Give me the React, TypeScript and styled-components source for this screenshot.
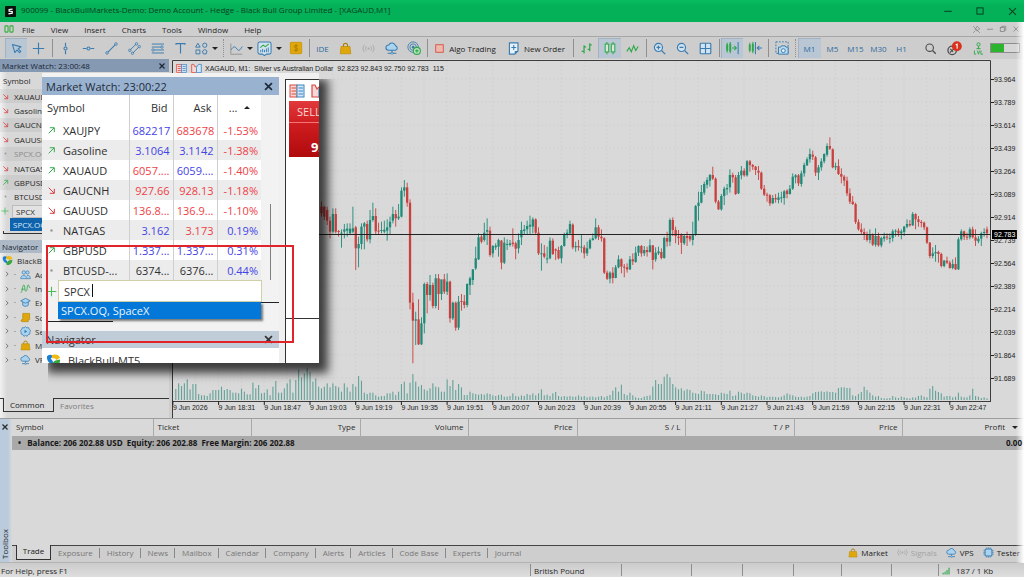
import React from "react";
import styled, { createGlobalStyle, css } from "styled-components";

const UI_FONT = '"Open Sans", "Noto Sans", sans-serif';
const CHART_FONT = '"Liberation Sans", sans-serif';
const BLUE = "#3b7cb0";
const GREEN = "#2fa84a";
const GOLD = "#dfa70c";
const GREY = "#8a8a8a";

const GlobalStyle = createGlobalStyle`
  * { box-sizing: border-box; }
  body { margin: 0; background: #cdcdcd; font-family: ${UI_FONT}; font-size: 8px; color: #2a2a2a; }
  button, input { font: inherit; color: inherit; }
  button { background: none; border: 0; padding: 0; cursor: default; }
  svg { display: block; flex: none; }
`;

/* ---------- icons ---------- */

const glyphs: Record<string, React.ReactNode> = {
  cursor: <path d="M3 3l3 10 2.500-3.200 3.200 3.400 1.600-1.600-3.200-3.300L13.500 6z" fill="none" stroke={BLUE} strokeWidth="1.300" strokeLinejoin="round" />,
  cross: <path d="M8 1v14M1 8h14" stroke={BLUE} strokeWidth="1.400" />,
  vline: <><path d="M8 1v4.500M8 10.500V15" stroke={BLUE} strokeWidth="1.400" /><circle cx="8" cy="8" r="1.900" fill="none" stroke={BLUE} strokeWidth="1.300" /></>,
  hline: <><path d="M1 8h4.500M10.500 8H15" stroke={BLUE} strokeWidth="1.400" /><circle cx="8" cy="8" r="1.900" fill="none" stroke={BLUE} strokeWidth="1.300" /></>,
  trend: <><path d="M3.500 12.500l9-9" stroke={BLUE} strokeWidth="1.300" /><circle cx="2.500" cy="13.500" r="1.600" fill="none" stroke={BLUE} /><circle cx="13.500" cy="2.500" r="1.600" fill="none" stroke={BLUE} /></>,
  channel: <><path d="M2.500 10l7.500-7.500M6 13.500L13.500 6" stroke={BLUE} strokeWidth="1.200" /><circle cx="2.200" cy="10.300" r="1.500" fill="none" stroke={BLUE} /><circle cx="10.500" cy="2.200" r="1.500" fill="none" stroke={BLUE} /><circle cx="5.500" cy="13.800" r="1.500" fill="none" stroke={BLUE} /><circle cx="13.800" cy="5.700" r="1.500" fill="none" stroke={BLUE} /></>,
  fib: <><path d="M1 2.500h15M1 6.200h11M4 9.800h12M1 13.500h15" stroke={BLUE} strokeWidth="1.200" /><circle cx="13.500" cy="6.200" r="1.500" fill="none" stroke={BLUE} /><circle cx="2.500" cy="9.800" r="1.500" fill="none" stroke={BLUE} /></>,
  text: <path d="M2.500 3.500V2h11v1.500M8 2v12" fill="none" stroke={BLUE} strokeWidth="1.400" />,
  shapes: <><path d="M3.500 1.500L6.300 6.300H.7z" fill="none" stroke={BLUE} strokeWidth="1.200" /><circle cx="12" cy="4" r="2.600" fill="none" stroke={BLUE} strokeWidth="1.200" /><path d="M1.200 9.800h4.800v4.800H1.200z" fill="none" stroke={BLUE} strokeWidth="1.200" /><path d="M12 9.200l2.800 1.900-1 3.500h-3.600l-1-3.500z" fill="none" stroke={BLUE} strokeWidth="1.200" /></>,
  wave: <><path d="M1 2v13h14" fill="none" stroke={GREY} strokeWidth="1" /><path d="M1.500 9.500c3-5 5-4 7-1s4 2 6.500-3" fill="none" stroke={BLUE} strokeWidth="1.200" /></>,
  indicator: <><path d="M3 1h10a2 2 0 012 2v9a2 2 0 01-2 2h-2.500L8 15.500 5.500 14H3a2 2 0 01-2-2V3a2 2 0 012-2z" fill="#cfe2ee" stroke={BLUE} strokeWidth="1.100" /><path d="M3.500 7l3-2.500 2.500 1.500 3.500-3" fill="none" stroke={GREEN} strokeWidth="1.100" /><path d="M4 12V9.500M6 12V8.500M8 12V9.500M10 12V8M12 12V7" stroke={BLUE} strokeWidth="1" /></>,
  dollar: <><rect x="1.500" y="1.500" width="13" height="13" rx="1" fill={GOLD} stroke="#c9950a" /><path d="M10.300 5.800C9.600 4.900 6 4.600 6 6.400c0 1.900 4.300 1.200 4.300 3.200 0 1.900-3.700 1.700-4.600.6M8 3.600v8.800" fill="none" stroke="#a87a00" strokeWidth="1" /></>,
  bag: <><path d="M5.500 6V4a2.500 2.500 0 015 0v2" fill="none" stroke="#a87a00" strokeWidth="1.300" /><path d="M2.500 5.500h11l1 9h-13z" fill={GOLD} stroke="#b98906" strokeWidth=".8" /></>,
  signals: <><circle cx="8" cy="8" r="1.300" fill="#a9a9a9" /><path d="M5.300 5.300a4 4 0 000 5.400M10.700 5.300a4 4 0 010 5.400M3 3.500a6.500 6.500 0 000 9M13 3.500a6.500 6.500 0 010 9" fill="none" stroke="#a9a9a9" strokeWidth="1.100" /></>,
  cloud: <><path d="M4 10.500a3 3 0 01.2-6 4.200 4.200 0 017.800.800 2.700 2.700 0 010 5.200z" fill="#a9d3ef" stroke={BLUE} strokeWidth="1.200" /><path d="M8 10.500V14M3 14h10" stroke={BLUE} strokeWidth="1.200" /><circle cx="8" cy="14" r="1.200" fill="#d0e4f2" stroke={BLUE} strokeWidth=".8" /></>,
  radar: <><circle cx="7" cy="7" r="6" fill="none" stroke={BLUE} strokeWidth="1" /><circle cx="7" cy="7" r="3.700" fill="none" stroke={BLUE} strokeWidth="1" /><circle cx="7" cy="7" r="1.500" fill={BLUE} /><circle cx="11.300" cy="11.300" r="4" fill="#bfe6c4" stroke={GREEN} strokeWidth="1.200" /><path d="M9.300 11.300h4M11.300 9.300v4" stroke={GREEN} strokeWidth="1.200" /></>,
  stop: <rect x="2.500" y="2.500" width="11" height="11" fill="#f1b7ae" stroke="#cf5440" strokeWidth="1.300" />,
  order: <><path d="M3 1h10.500v10L9.500 15H3z" fill="#e6f1f8" stroke={BLUE} strokeWidth="1.400" /><path d="M5.300 6.800h6M8.300 3.800v6" stroke={BLUE} strokeWidth="1.300" /><path d="M9.500 15v-4h4" fill={BLUE} /></>,
  bars: <path d="M5 4v10M2 11.500h3M5 6h2.500M12 1.500v10M9.500 9H12M12 3.500h2.500" fill="none" stroke={GREEN} strokeWidth="1.500" />,
  candles: <><path d="M4.500 1v14M11.500 1v14" stroke={GREEN} strokeWidth="1.200" /><rect x="2.500" y="3.500" width="4" height="9" fill="#d6e8d6" stroke={GREEN} strokeWidth="1.200" /><rect x="9.500" y="3.500" width="4" height="9" fill="#d6e8d6" stroke={GREEN} strokeWidth="1.200" /></>,
  line: <path d="M1 11.500l3-4.500 2.500 5 3-7.500 2.500 6 3-5" fill="none" stroke={GREEN} strokeWidth="1.400" />,
  zoomIn: <><circle cx="6.700" cy="6.700" r="5" fill="#cfe2f0" stroke={BLUE} strokeWidth="1.400" /><path d="M10.500 10.500L15 15M4.300 6.700h4.800M6.700 4.300v4.800" stroke={BLUE} strokeWidth="1.500" /></>,
  zoomOut: <><circle cx="6.700" cy="6.700" r="5" fill="#cfe2f0" stroke={BLUE} strokeWidth="1.400" /><path d="M10.500 10.500L15 15M4.300 6.700h4.800" stroke={BLUE} strokeWidth="1.500" /></>,
  tile: <><rect x="1.500" y="1.500" width="13" height="13" rx="1" fill="#d3e4f0" stroke={BLUE} strokeWidth="1.400" /><path d="M8 1.500v13M1.500 8h13" stroke={BLUE} strokeWidth="1.400" /></>,
  scroll: <><path d="M2.500 4v7M6 3v9" stroke={GREEN} strokeWidth="2.200" /><path d="M2.500 2v11M6 1v13M8 8h5M10.500 5.500L13 8l-2.500 2.500" fill="none" stroke={GREEN} strokeWidth="1.200" /><path d="M15 1v14" stroke={BLUE} strokeWidth="1.200" /></>,
  shift: <><path d="M2 4v7M5.500 3v9" stroke={GREEN} strokeWidth="2.200" /><path d="M2 2v11M5.500 1v13" stroke={GREEN} strokeWidth="1.100" /><path d="M8.500 1v14M16 8h-5.500M13 5.500L10.500 8l2.500 2.500" fill="none" stroke={BLUE} strokeWidth="1.200" /></>,
  camera: <><rect x="1" y="1" width="14" height="13" fill="none" stroke={BLUE} strokeDasharray="2 1.500" strokeWidth="1.100" /><path d="M4 7h2.500l1-1.500h4l1 1.500H15v8H4z" fill="#b9d8ec" stroke={BLUE} strokeWidth="1.100" /><circle cx="9.500" cy="11" r="2.200" fill="#e4f0f8" stroke={BLUE} strokeWidth="1.100" /></>,
  search: <><circle cx="7" cy="7" r="4.600" fill="none" stroke="#4c4c4c" strokeWidth="1.400" /><path d="M10.500 10.500l4 4" stroke="#4c4c4c" strokeWidth="1.600" /></>,
  badge: <><circle cx="5.500" cy="10" r="4.500" fill="none" stroke="#4c4c4c" strokeWidth="1.400" /><path d="M3 12.500l5-5M3.500 8.500l3 3" stroke="#4c4c4c" strokeWidth="1.200" /><circle cx="10.500" cy="5.500" r="5.300" fill="#d8321f" /><path d="M9.300 4.300l1.500-1v4.900" fill="none" stroke="#fff" strokeWidth="1.100" /></>,
  level: <><circle cx="8" cy="3" r="2" fill="none" stroke={GREEN} strokeWidth="1.200" /><path d="M8 5v3.500M5.500 8.200h5" stroke={GREEN} strokeWidth="1.200" /><path d="M3 10.500V15h2M6.500 10.500L8 15l1.500-4.500M11 10.500V15h2.500" fill="none" stroke={GREEN} strokeWidth="1.100" /></>,
  up: <path d="M3 13L12.500 3.500M5 3h8v8" fill="none" stroke={GREEN} strokeWidth="1.700" />,
  down: <path d="M3 3l9.500 9.500M13 5v8H5" fill="none" stroke="#d9363b" strokeWidth="1.700" />,
  flat: <circle cx="8" cy="8" r="2.200" fill="#9b9b9b" />,
  plus: <path d="M8 1v14M1 8h14" stroke="#4dbd5c" strokeWidth="1.600" />,
  brand: <><path d="M1 4.500C1 2 5 1 7.500 3L5 6.500c2 1 3 3 2 5.500C3 11 1 8 1 4.500z" fill="#1b7fd1" /><path d="M6 2.500C9 .5 14 1.500 15 5l-4 2.500C10 5.500 8.500 5.500 7 6z" fill="#f2b90f" /><path d="M7 14.500c-1.500-2 0-5 3-6.500l5-1c.5 4-3 8.500-8 7.500z" fill="#37a63f" /></>,
  people: <><circle cx="5.500" cy="5" r="2.500" fill="#a9d3ef" stroke={BLUE} /><circle cx="11" cy="5" r="2.300" fill="#a9d3ef" stroke={BLUE} /><path d="M1 14c0-6 9-6 9 0zM10 14h5c0-4-2-5-5-4.500" fill="#a9d3ef" stroke={BLUE} /></>,
  fx: <path d="M1 14c3 0 2-11 4.500-11S6 12 8.500 12 10 3 12 3s1 5 3 4M2 9h5" fill="none" stroke={GREEN} strokeWidth="1.200" />,
  hat: <><path d="M4 7v5c2 2 6 2 8 0V7" fill="#a9d3ef" stroke={BLUE} strokeWidth="1.200" /><path d="M1 5.500L8 2l7 3.500L8 9z" fill="#a9d3ef" stroke={BLUE} strokeWidth="1.200" /></>,
  scroll2: <path d="M4 2h10v9H12v3H3c-2 0-2-3 0-3h1z" fill={GOLD} stroke="#b98906" strokeWidth="1" />,
  gear: <><path d="M8 1l2 1.700 2.600-.3.800 2.500 2 1.600L14.300 9l.2 2.600-2.500.800L10.300 15 8 13.800 5.700 15 4 12.400l-2.500-.8.200-2.600L.6 6.500l2-1.600.800-2.500 2.600.3z" fill="#a9d3ef" stroke={BLUE} strokeWidth="1.100" /><path d="M6.500 5.500v5L10.500 8z" fill={BLUE} /></>,
  chip: <><rect x="3" y="3" width="10" height="10" rx="1.500" fill="#a9d3ef" stroke={BLUE} strokeWidth="1.500" /><path d="M5.500.5v2M8 .5v2M10.500.5v2M5.500 13.500v2M8 13.500v2M10.500 13.500v2M.5 5.500h2M.5 8h2M.5 10.500h2M13.500 5.500h2M13.500 8h2M13.500 10.500h2" stroke={BLUE} /></>,
  strength: <path d="M2 15v-3M5.500 15v-5M9 15V7M12.500 15V3" stroke={GREEN} strokeWidth="2" />,
  close: <path d="M3 3l10 10M13 3L3 13" stroke="currentColor" strokeWidth="2.400" />,
  closeThin: <path d="M3 3l10 10M13 3L3 13" stroke="currentColor" strokeWidth="1.500" />,
  minimise: <path d="M2 8.500h12" stroke="currentColor" strokeWidth="1.600" />,
  maximise: <rect x="3" y="3" width="10" height="10" fill="none" stroke="currentColor" strokeWidth="1.600" />,
  restore: <><rect x="2.500" y="5" width="8" height="8" fill="none" stroke="currentColor" strokeWidth="1.500" /><path d="M5.500 5V2.500h8v8H11" fill="none" stroke="currentColor" strokeWidth="1.500" /></>,
  pin: <path d="M2 2l12 12M9 2l5 5-3 1-2 3-4-4 3-2zM6 10l-4 4" fill="none" stroke="currentColor" strokeWidth="1.200" />,
  chevron: <path d="M5 2l6 6-6 6" fill="none" stroke="#555" strokeWidth="2" />,
  depth: <><rect x="1" y="2" width="7" height="12" fill="#f6d9d7" stroke="#d9473f" /><rect x="8" y="2" width="7" height="12" fill="#d5e6f5" stroke="#3a86c6" /><path d="M2.500 5H7M2.500 8H7M2.500 11H7" stroke="#d9473f" strokeWidth="1.200" /><path d="M9.500 5H14M9.500 8H14M9.500 11H14" stroke="#3a86c6" strokeWidth="1.200" /></>,
  oneClick: <><path d="M8 14H1V2h3l2 4 2-2" fill="#f6d9d7" stroke="#d9473f" strokeWidth="1.200" /><path d="M8 14h7V2h-4L8 6z" fill="#d5e6f5" stroke="#3a86c6" strokeWidth="1.200" /></>,
  logo: <><rect width="16" height="16" rx="1" fill="#06130c" /><path d="M11 4.500L6 5v2.500l4.500.500v2.500L5 11.500" fill="none" stroke="#fff" strokeWidth="1.800" /></>,
  twin: <><rect x="1.500" y="3" width="5" height="10" rx="1" fill="none" stroke="#2fae3c" strokeWidth="1.700" /><rect x="9.500" y="3" width="5" height="10" rx="1" fill="none" stroke="#2fae3c" strokeWidth="1.700" /></>,
};

const Icon = ({ name, size = 13 }: { name: string; size?: number }) => (
  <svg width={size} height={size} viewBox="0 0 16 16" aria-hidden="true">{glyphs[name]}</svg>
);

/* ---------- window chrome ---------- */

const Window = styled.div`
  position: relative;
  display: flex;
  flex-direction: column;
  min-height: 100vh;
  background: #cdcdcd;
`;
const EdgeGlow = styled.div`
  position: absolute;
  top: 22px;
  right: 0;
  bottom: 14px;
  width: 8px;
  background: linear-gradient(to right, transparent, #fff);
  pointer-events: none;
`;
const TitleBar = styled.header`
  display: flex;
  align-items: center;
  gap: 5px;
  height: 22px;
  padding: 0 6px 0 5px;
  background: linear-gradient(#08bd60, #04b058 30%);
  color: #06421f;
`;
const Title = styled.h1`
  flex: 1;
  margin: 0;
  font-size: 8px;
  font-weight: 400;
  line-height: 10px;
  padding-bottom: 2px;
  white-space: pre;
`;
const WindowButtons = styled.div<{ $gap: number }>`
  display: flex;
  align-items: center;
  gap: ${(p) => p.$gap}px;
`;
const MenuBar = styled.nav`
  display: flex;
  align-items: center;
  height: 15px;
  padding: 0 4px;
  border-bottom: 1px solid #a6a6a6;
  background: #cfcfcf;
  color: #1f1f1f;
`;
const Menus = styled.div`
  display: flex;
  flex: 1;
  gap: 16px;
  margin-left: 8px;
`;
const Muted = styled.div`
  color: #808080;
`;
const Toolbar = styled.div`
  display: flex;
  align-items: center;
  height: 22px;
  padding: 0 4px 0 5px;
  background: #cdcdcd;
`;
const Tool = styled.button<{ $active?: boolean; $w?: number; $dim?: boolean }>`
  display: flex;
  align-items: center;
  justify-content: center;
  gap: 4px;
  flex: none;
  width: ${(p) => p.$w ?? 23}px;
  height: 20px;
  color: #2e6c9e;
  white-space: nowrap;
  ${(p) => p.$active && css`
    background: #b9c7d5;
    box-shadow: inset 1px 1px 0 #a3b2c2;
  `}
`;
const WordTool = styled(Tool)`
  color: #1c1c1c;
`;
const Divider = styled.span<{ $dotted?: boolean; $w?: number }>`
  display: flex;
  justify-content: center;
  flex: none;
  width: ${(p) => p.$w ?? 4}px;
  height: 18px;
  &::before {
    content: "";
    border-left: 1px ${(p) => (p.$dotted ? "dotted" : "solid")} #8f8f8f;
  }
`;
const Caret = styled.span<{ $up?: boolean }>`
  border: 3px solid transparent;
  ${(p) => (p.$up ? "border-bottom-color: #222; border-top-width: 0;" : "border-top-color: #222; border-bottom-width: 0;")}
`;
const ToolsEnd = styled.div`
  display: flex;
  align-items: center;
  margin-left: auto;
`;
const Battery = styled.span`
  width: 30px;
  height: 10px;
  border: 1px solid #8c8c8c;
  background: linear-gradient(to right, #2cb52c 45%, #d6d6d6 45%);
`;

/* ---------- side panels ---------- */

const Main = styled.main`
  display: flex;
`;
const Side = styled.aside`
  display: flex;
  flex-direction: column;
  flex: none;
  width: 169px;
  margin-right: 3px;
  background: linear-gradient(to right, #f1f1f1, #d8d8d8 7px);
`;
const PanelHead = styled.div<{ $soft?: boolean }>`
  display: flex;
  align-items: center;
  justify-content: space-between;
  height: 13px;
  padding: 0 3px 0 2px;
  background: ${(p) => (p.$soft ? "#adb9c7" : "#8599b3")};
  color: #1b2735;
`;
const Watch = styled.div`
  display: flex;
  flex-direction: column;
  height: 146px;
`;
const WatchTitle = styled.div`
  padding: 3px 3px 0;
  height: 17px;
`;
const WatchRow = styled.div<{ $alt?: boolean; $dim?: boolean }>`
  display: flex;
  flex: 1;
  align-items: center;
  gap: 5px;
  padding-left: 2px;
  background: ${(p) => (p.$alt ? "rgba(0,0,0,0.05)" : "transparent")};
  color: ${(p) => (p.$dim ? "#8b8b8b" : "#262626")};
`;
const QuickAdd = styled.div`
  display: flex;
  align-items: center;
  gap: 3px;
  height: 14px;
  padding-left: 1px;
`;
const QuickInput = styled.input`
  flex: 1;
  min-width: 0;
  height: 13px;
  padding: 0 3px;
  border: 1px solid #bbb;
  background: #e2e2e2;
`;
const QuickHit = styled.button`
  height: 13px;
  margin-left: 10px;
  padding: 0 3px;
  background: #0f63ad;
  color: #d9e8f5;
  text-align: left;
`;
const TabEdge = styled.div`
  height: 3px;
  margin: 0 0 6px 3px;
  border: solid #333;
  border-width: 0 0 1px 1px;
`;
const Tree = styled.ul`
  display: flex;
  flex-direction: column;
  height: 114px;
  margin: 0;
  padding: 0;
  list-style: none;
`;
const TreeItem = styled.li<{ $root?: boolean }>`
  display: flex;
  flex: 1;
  align-items: center;
  gap: 4px;
  padding-left: ${(p) => (p.$root ? 2 : 4)}px;
`;
const Twig = styled.span`
  width: 2px;
  border-top: 1px solid #a9a9a9;
`;
const SideTabs = styled.div`
  display: flex;
  align-items: center;
  height: 14px;
  margin-top: auto;
  margin-bottom: 6px;
  &::before {
    content: "";
    width: 3px;
    align-self: flex-start;
    border-top: 1px solid #333;
  }
`;
const SideTab = styled.button<{ $active?: boolean }>`
  width: ${(p) => (p.$active ? "51px" : "auto")};
  flex: ${(p) => (p.$active ? "none" : 1)};
  height: 14px;
  padding: 0 6px;
  text-align: left;
  border: solid #333;
  border-width: ${(p) => (p.$active ? "0 1px 1px 1px" : "1px 0 0 0")};
  color: ${(p) => (p.$active ? "#222" : "#7d7d7d")};
`;

/* ---------- chart ---------- */

const ChartPane = styled.section`
  flex: 1;
  min-width: 0;
  background: #d9d9d9;
`;
const ChartSvg = styled.svg`
  width: 100%;
  height: auto;
  font-family: ${CHART_FONT};
  font-size: 7px;
  fill: #222;
`;

type Candle = [high: number, low: number, open: number, close: number];

// Bars are stored in thirds of a pixel below the base line of their session.
const early: Candle[] = [
  [425,470,440,460],[438,480,440,470],[440,495,450,482],[470,535,482,515],[445,520,515,462],[445,520,462,515],[510,530,513,516],[508,563,520,518],[492,535,515,508],[490,530,512,506],[490,525,520,506],[440,520,515,505],
];
const middle: Candle[] = [
  [288,420,292,355],[320,412,355,342],[280,358,342,290],[276,358,290,280],[272,335,282,328],[240,340,328,270],[218,275,270,258],[235,312,258,304],[278,315,302,304],[275,310,302,300],
  [272,310,305,299],[268,332,302,292],[260,315,292,275],[230,280,272,252],[240,290,252,265],[222,270,265,260],[172,262,260,182],[150,200,182,172],[158,230,172,218],[208,538,218,518],
  [488,700,518,572],[545,645,572,568],[508,645,568,643],[562,645,643,580],[458,610,580,462],[456,550,462,495],[435,512,495,465],[458,535,465,528],[432,535,528,445],[432,540,445,492],
  [450,510,492,448],[432,492,448,485],[430,495,485,455],[452,578,455,565],[515,570,565,518],[515,602,518,593],[498,600,593,515],[492,542,513,516],[495,535,514,525],[460,532,525,462],
  [440,495,465,445],[418,465,450,418],[350,420,415,385],[310,390,388,322],[312,340,320,335],[278,335,330,308],[265,345,305,300],[290,380,302,375],[345,382,370,348],[340,360,352,347],
  [326,380,350,330],[330,418,332,398],[322,402,398,338],[328,360,345,342],[330,350,345,340],[295,350,338,342],[335,388,340,356],[310,370,355,330],[275,345,322,300],[285,315,303,298],
  [272,315,298,288],[257,312,290,284],[262,310,290,268],[265,312,268,308],[292,375,308,370],[340,422,372,370],[345,385,370,380],[350,400,388,385],[322,388,385,332],[325,375,332,372],
  [355,390,358,362],[350,388,360,385],[345,400,385,348],[308,350,348,312],[298,325,312,308],[272,312,310,282],[280,358,284,352],[335,365,352,348],[330,362,348,352],[312,368,352,350],
  [345,385,352,370],[335,378,370,355],[325,358,355,330],[310,332,330,325],[265,328,325,292],[285,330,292,320],[298,335,320,325],[322,432,325,428],[422,450,428,446],[424,460,446,428],
  [412,460,428,444],[405,445,444,412],[376,415,412,388],[385,430,388,410],[402,442,410,412],[400,428,412,418],[378,420,418,388],[370,405,388,394],[350,398,396,368],[346,378,368,348],
  [345,380,348,370],[348,378,370,360],[350,380,360,366],[328,368,366,346],[345,418,346,390],[352,395,388,368],[350,375,370,364],[355,388,366,384],[320,386,384,324],[305,350,324,335],
  [265,348,335,270],[262,318,270,300],[290,340,300,318],[300,345,320,324],
];
const late: Candle[] = [
  [520,582,525,548],[522,555,550,528],[515,558,528,534],[522,545,528,538],[485,556,540,525],[435,528,525,438],[395,482,438,428],[375,430,428,396],[365,405,398,372],[352,385,374,360],
  [342,380,362,345],[320,360,345,356],[352,430,356,425],[420,450,425,448],[402,452,448,408],[380,435,408,386],[372,405,388,384],[328,398,382,345],[338,368,345,352],[345,405,352,402],
  [336,402,400,345],[318,358,346,332],[325,350,332,346],[300,350,346,304],[300,335,304,315],[312,330,315,320],[318,345,320,330],[318,360,332,338],[335,390,338,386],[375,408,386,404],
  [398,425,404,406],[402,438,406,430],[405,432,430,414],[402,428,414,418],[398,430,420,412],[395,428,414,412],[390,434,414,394],[388,415,392,402],[375,404,402,386],[340,390,386,350],
  [342,370,352,346],[342,378,346,370],[332,380,372,340],[308,350,340,315],[292,318,316,298],[266,308,298,282],[272,300,284,290],[288,348,292,338],[315,360,338,322],[295,332,322,304],
  [280,310,304,282],[250,290,284,258],[232,270,258,266],[265,325,268,322],[308,330,322,318],[298,345,318,342],[325,370,342,350],[345,378,350,362],[350,408,362,400],[385,432,400,425],
  [408,435,425,432],[428,492,432,486],[478,512,486,508],[490,525,508,516],[505,540,516,524],[515,545,524,540],[508,550,540,522],[520,558,524,554],[505,560,554,528],[518,560,528,556],
  [530,562,556,534],[518,545,536,530],[520,540,530,533],[520,550,536,534],[508,545,534,514],[508,530,514,512],[505,530,512,520],[508,538,520,514],[498,528,516,500],[478,505,500,492],
  [480,500,492,496],[456,498,496,462],[460,508,462,478],[468,500,478,486],[480,502,486,488],[485,510,488,502],[500,552,502,548],[546,595,548,588],[562,595,588,580],[555,605,580,576],
  [572,608,576,582],[578,622,582,618],[600,622,618,602],[590,612,602,608],[602,626,608,624],[598,628,624,612],[592,630,612,628],[532,630,628,538],[508,542,538,514],[512,540,514,530],
  [518,540,530,532],[502,538,532,508],[500,535,508,532],[508,558,532,542],[528,550,544,536],[515,558,536,520],[505,530,518,516],[500,535,508,520],
];
const volumes = [
  33,50,42,50,62,32,48,48,18,14,14,12,20,30,30,30,40,30,33,30,22,22,20,34,25,17,17,52,35,45,20,22,32,14,40,57,22,22,35,50,62,22,60,92,68,80,97,85,55,65,40,35,40,50,38,50,42,38,25,50,38,25,48,
  40,72,58,22,18,22,22,14,10,12,12,20,20,25,15,25,48,55,20,52,78,55,40,45,32,28,35,50,40,38,25,25,62,42,60,30,48,38,15,15,25,20,18,16,18,16,20,18,14,12,15,16,10,10,12,20,12,10,14,12,18,15,20,14,20,32,14,16,12,20,24,12,10,12,10,12,10,10,14,10,12,8,10,10,8,10,12,8,12,15,28,38,25,46,18,14,22,14,8,6,6,10,12,14,40,60,48,48,70,78,68,48,38,32,
  35,28,32,30,22,20,18,28,26,18,18,18,17,15,22,20,18,28,12,14,25,22,18,22,20,14,12,10,14,12,8,10,10,9,8,10,14,20,16,14,10,9,10,8,10,12,20,24,25,26,24,26,24,24,22,36,38,38,36,36,14,12,18,24,40,30,22,14,10,12,6,5,5,6,12,8,6,10,8,6,5,8,7,12,14,10,8,34,42,28,24,20,10,12,12,8,10,22,10,8,8,14,34,12,10,6,8,5,
];
const STEP = 45.7 / 16;
const ORIGIN_X = 355.7;
const barX = (i: number) => ORIGIN_X + i * STEP;

const prices = ["93.964","93.789","93.614","93.439","93.264","93.089","92.914","92.739","92.564","92.389","92.214","92.039","91.864","91.689"];
const times = ["9 Jun 2026","9 Jun 18:31","9 Jun 18:47","9 Jun 19:03","9 Jun 19:19","9 Jun 19:35","9 Jun 19:51","9 Jun 20:07","9 Jun 20:23","9 Jun 20:39","9 Jun 20:55","9 Jun 21:11","9 Jun 21:27","9 Jun 21:43","9 Jun 21:59","9 Jun 22:15","9 Jun 22:31","9 Jun 22:47"];

const Candles = ({ data, first, base }: { data: Candle[]; first: number; base: number }) => (
  <g>
    {data.map(([high, low, open, close], i) => {
      const x = barX(first + i);
      const colour = open >= close ? "#1f8a78" : "#c9413f";
      const top = base + Math.min(open, close) / 3;
      const height = Math.max(Math.abs(open - close) / 3, 1);
      return (
        <g key={i} fill={colour}>
          <rect x={x - 0.4} y={base + high / 3} width={0.9} height={(low - high) / 3} />
          <rect x={x - 1.1} y={top} width={2.3} height={height} />
        </g>
      );
    })}
  </g>
);

const PriceChart = () => (
  <ChartSvg viewBox="172 59 852 359" role="img" aria-label="XAGAUD one minute chart">
    <g stroke="#cecece" strokeWidth="0.7" strokeDasharray="2 2">
      {prices.map((p, i) => <path key={p} d={`M173 ${79 + i * 23}H990`} />)}
      {Array.from({ length: 35 }, (_, i) => <path key={i} d={`M${195.6 + i * 22.85} 61V400`} />)}
    </g>
    <g fill="#62a298">
      {volumes.map((v, i) => <rect key={i} x={barX(i - 63) - 0.5} y={400 - v / 3} width={1.1} height={v / 3} />)}
    </g>
    <Candles data={early} first={-12} base={60} />
    <Candles data={middle} first={0} base={130} />
    <Candles data={late} first={114} base={60} />
    <path d="M172.500 418V60.500H990.500V401.500M172 401.500H991" fill="none" stroke="#3c3c3c" />
    <path d="M172 234.500H991" stroke="#222" />
    {prices.map((p, i) => (
      <g key={p}>
        <path d={`M991 ${79.5 + i * 23}h3`} stroke="#222" />
        <text x="994" y={82 + i * 23}>{p}</text>
      </g>
    ))}
    {times.map((t, i) => (
      <g key={t}>
        <path d={`M${172.9 + i * 45.7} 401v4`} stroke="#222" />
        <text x={172.9 + i * 45.7} y={410}>{t}</text>
      </g>
    ))}
    <rect x="992" y="230" width="25" height="9" fill="#000" />
    <text x="994" y="237" fill="#fff">92.783</text>
    <svg x="176" y="63" width="11" height="11" viewBox="0 0 16 16">{glyphs.depth}</svg>
    <svg x="191" y="63" width="11" height="11" viewBox="0 0 16 16">{glyphs.oneClick}</svg>
    <text x="205" y="71">{"XAGAUD, M1:\u00a0 Silver vs Australian Dollar\u00a0 92.823 92.843 92.750 92.783\u00a0 115"}</text>
  </ChartSvg>
);

/* ---------- magnified market watch ---------- */

const Lens = styled.section`
  position: absolute;
  top: 73px;
  left: 42px;
  display: flex;
  width: 277px;
  height: 290px;
  overflow: hidden;
  background: #f0f0f0;
  font-size: 11px;
  color: #303030;
`;
const LensShadow = styled.div`
  position: absolute;
  top: 73px;
  left: 42px;
  width: 277px;
  height: 290px;
  box-shadow: 7px 8px 9px 2px rgba(0, 0, 0, 0.72);
  clip-path: inset(6px -30px -30px 6px);
`;
const LensPanel = styled.div`
  display: flex;
  flex-direction: column;
  flex: none;
  width: 237px;
  padding-top: 4px;
  background: #f2f2f2;
`;
const LensHead = styled.div<{ $soft?: boolean }>`
  display: flex;
  align-items: center;
  justify-content: space-between;
  flex: none;
  height: ${(p) => (p.$soft ? 17 : 18)}px;
  padding: 0 5px 0 4px;
  background: ${(p) => (p.$soft ? "#c1ccd9" : "#98b2d0")};
  color: ${(p) => (p.$soft ? "#333" : "#1f2a38")};
`;
const LensBody = styled.div`
  display: flex;
  align-items: flex-start;
  flex: none;
  height: 185px;
`;
const Quotes = styled.table`
  width: 219px;
  table-layout: fixed;
  border-collapse: collapse;
  background: #fff;
  th, td {
    padding: 0 3px;
    text-align: right;
    font-weight: 400;
    border-left: 1px solid #cfcfcf;
    white-space: nowrap;
    line-height: 19px;
  }
  th { height: 25px; padding: 0 5px; }
  th:first-child, td:first-child { text-align: left; border-left: 0; padding-left: 5px; }
`;
const QuoteRow = styled.tr<{ $alt: boolean }>`
  height: 20px;
  background: ${(p) => (p.$alt ? "#ececec" : "#fff")};
`;
const tones = { b: "#4343e6", r: "#ee4145", k: "#303030" };
type Tone = keyof typeof tones;
const Quote = styled.td<{ $tone: Tone }>`
  color: ${(p) => tones[p.$tone]};
`;
const SymbolCell = styled.span`
  display: flex;
  align-items: center;
  gap: 7px;
`;
const SortHead = styled.span`
  display: flex;
  align-items: center;
  justify-content: space-evenly;
`;
const ScrollTrack = styled.div`
  flex: 1;
  padding: 109px 8px 0 9px;
`;
const ScrollThumb = styled.div`
  height: 76px;
  width: 1px;
  background: #808080;
`;
const SearchRow = styled.label`
  position: relative;
  display: flex;
  align-items: center;
  flex: none;
  gap: 1px;
  height: 22px;
  padding-left: 4px;
`;
const TextCursor = styled.span`
  position: absolute;
  top: 4px;
  left: 50px;
  width: 1px;
  height: 13px;
  background: #111;
`;
const SearchInput = styled.input`
  width: 204px;
  height: 22px;
  padding: 0 5px;
  border: 1px solid #cfcfa8;
  background: #fff;
`;
const HitRow = styled.div`
  position: relative;
  display: flex;
  flex: none;
  height: 19px;
  padding-left: 16px;
  &::before {
    content: "";
    position: absolute;
    top: 0;
    left: 5px;
    width: 65px;
    height: 19px;
    border: solid #222;
    border-width: 0 0 1px 1px;
  }
  &::after {
    content: "";
    flex: 1;
    border-top: 1px solid #222;
  }
`;
const Hit = styled.button`
  position: relative;
  width: 203px;
  height: 17px;
  padding: 0 3px;
  background: #0478d8;
  color: #e8f3fc;
  text-align: left;
  line-height: 16px;
  box-shadow: 2px 2px 2px rgba(0, 0, 0, 0.5);
`;
const LensGap = styled.div`
  flex: none;
  height: 10px;
`;
const LensRoot = styled.div`
  display: flex;
  align-items: center;
  gap: 7px;
  height: 24px;
  flex: none;
  padding-left: 4px;
  background: #fff;
`;
const LensChart = styled.div`
  flex: 1;
  margin: 6px 0 0 6px;
  border: solid #333;
  border-width: 1px 0 0 1px;
  background: #fff;
`;
const LensIcons = styled.div`
  display: flex;
  gap: 6px;
  height: 21px;
  padding: 3px 0 0 3px;
`;
const Sell = styled.button`
  display: flex;
  flex-direction: column;
  width: 44px;
  height: 56px;
  margin-left: 3px;
  background: linear-gradient(#e2393b, #cf1d20 40%, #b00a0d);
  color: #f6d6d4;
  text-align: left;
`;
const SellLabel = styled.span`
  width: 100%;
  height: 22px;
  padding: 2px 8px;
  line-height: 18px;
  border-bottom: 1px solid #e77;
`;
const SellPrice = styled.strong`
  padding: 15px 22px 0;
  color: #fff;
  font-size: 13px;
  line-height: 18px;
`;
const LensAxis = styled.div`
  height: 162px;
  border-bottom: 1px solid #333;
`;
const Highlight = styled.div`
  position: absolute;
  top: 245px;
  left: 46px;
  width: 248px;
  height: 98px;
  border: 2px solid #e0242a;
  pointer-events: none;
`;

type QuoteData = [icon: string, name: string, bid: string, bidTone: Tone, ask: string, askTone: Tone, change: string];
const quotes: QuoteData[] = [
  ["up", "XAUJPY", "682217", "b", "683678", "r", "-1.53%"],
  ["up", "Gasoline", "3.1064", "b", "3.1142", "b", "-1.38%"],
  ["up", "XAUAUD", "6057....", "r", "6059....", "b", "-1.40%"],
  ["down", "GAUCNH", "927.66", "r", "928.13", "r", "-1.18%"],
  ["down", "GAUUSD", "136.8...", "r", "136.9...", "r", "-1.10%"],
  ["flat", "NATGAS", "3.162", "b", "3.173", "r", "0.19%"],
  ["up", "GBPUSD", "1.337...", "b", "1.337...", "b", "0.31%"],
  ["flat", "BTCUSD-...", "6374...", "k", "6376...", "k", "0.44%"],
];

const MarketLens = () => (
  <>
    <LensShadow />
    <Lens aria-label="Market Watch">
      <LensPanel>
        <LensHead>
          <span>Market Watch: 23:00:22</span>
          <button aria-label="Close Market Watch"><Icon name="close" size={11} /></button>
        </LensHead>
        <LensBody>
          <Quotes>
            <colgroup><col width="87" /><col width="44" /><col width="44" /><col width="44" /></colgroup>
            <thead>
              <tr><th>Symbol</th><th>Bid</th><th>Ask</th><th><SortHead>...<Caret $up /></SortHead></th></tr>
            </thead>
            <tbody>
              {quotes.map(([icon, name, bid, bt, ask, at, change], i) => (
                <QuoteRow key={name} $alt={i % 2 === 1}>
                  <td><SymbolCell><Icon name={icon} size={9} />{name}</SymbolCell></td>
                  <Quote $tone={bt}>{bid}</Quote>
                  <Quote $tone={at}>{ask}</Quote>
                  <Quote $tone={change.startsWith("-") ? "r" : "b"}>{change}</Quote>
                </QuoteRow>
              ))}
            </tbody>
          </Quotes>
          <ScrollTrack><ScrollThumb /></ScrollTrack>
        </LensBody>
        <SearchRow>
          <Icon name="plus" size={11} />
          <SearchInput aria-label="Add symbol" defaultValue="SPCX" />
          <TextCursor />
        </SearchRow>
        <HitRow><Hit>SPCX.OQ, SpaceX</Hit></HitRow>
        <LensGap />
        <LensHead $soft>
          <span>Navigator</span>
          <button aria-label="Close Navigator"><Icon name="close" size={11} /></button>
        </LensHead>
        <LensRoot><Icon name="brand" size={15} />BlackBull-MT5</LensRoot>
      </LensPanel>
      <LensChart>
        <LensIcons><Icon name="depth" size={16} /><Icon name="oneClick" size={16} /></LensIcons>
        <Sell><SellLabel>SELL</SellLabel><SellPrice>92</SellPrice></Sell>
        <LensAxis />
      </LensChart>
    </Lens>
    <Highlight />
  </>
);

/* ---------- toolbox ---------- */

const Toolbox = styled.section`
  display: flex;
  flex: 1;
  border-top: 1px solid #9d9d9d;
  background: #d9d9d9;
`;
const Spine = styled.div`
  display: flex;
  flex-direction: column;
  align-items: center;
  justify-content: space-between;
  flex: none;
  width: 12px;
  padding: 4px 2px 3px 0;
  background: linear-gradient(to right, #bacbdd 8px, #d9d9d9);
`;
const SpineLabel = styled.span`
  writing-mode: vertical-rl;
  transform: rotate(180deg);
  line-height: 10px;
`;
const ToolboxBody = styled.div`
  display: flex;
  flex-direction: column;
  flex: 1;
  min-width: 0;
`;
const Trades = styled.table`
  width: 100%;
  table-layout: fixed;
  border-collapse: collapse;
  line-height: 10px;
  th {
    height: 17px;
    padding: 0 4px 1px;
    font-weight: 400;
    text-align: right;
    border-left: 1px solid #a9a9a9;
  }
  th:first-child { border-left: 0; }
  th:nth-child(-n + 2) { text-align: left; }
  td { height: 14px; padding: 0 2px 0 6px; background: #a9a9a9; font-weight: 700; color: #161616; white-space: pre; }
  td:last-child { text-align: right; }
`;
const ProfitHead = styled.span`
  display: flex;
  align-items: center;
  justify-content: flex-end;
  gap: 7px;
  padding-right: 2px;
`;
const ProfitTotal = styled.span`
  position: relative;
  z-index: 1;
`;
const Tabs = styled.div`
  display: flex;
  height: 17px;
  margin-top: auto;
  background: #cecece;
  &::before {
    content: "";
    width: 4px;
    border-top: 1px solid #444;
  }
`;
const TradeTab = styled.button`
  width: 35px;
  height: 15px;
  padding-bottom: 2px;
  line-height: 10px;
  border: solid #333;
  border-width: 0 1px 1px 1px;
  background: #d9d9d9;
  color: #1a1a1a;
`;
const TabList = styled.div`
  display: flex;
  flex: 1;
  align-items: center;
  padding: 0 4px 3px 0;
  border-top: 1px solid #444;
`;
const BoxTab = styled.button`
  height: 10px;
  padding: 0 6px 0 7px;
  line-height: 9px;
  color: #777;
  & + & { border-left: 1px solid #888; }
`;
const Services = styled.div`
  display: flex;
  gap: 9px;
  margin-left: auto;
`;
const Service = styled.button<{ $off?: boolean }>`
  display: flex;
  align-items: center;
  gap: 3px;
  color: ${(p) => (p.$off ? "#a3a3a3" : "#222")};
`;
const StatusBar = styled.footer`
  display: flex;
  align-items: center;
  height: 15px;
  border-top: 1px solid #b4b4b4;
  background: linear-gradient(#cbcbcb, #dedede);
`;
const StatusCell = styled.div<{ $size: number }>`
  display: flex;
  align-items: center;
  gap: 5px;
  flex: ${(p) => p.$size} 1 ${(p) => p.$size}px;
  height: 12px;
  padding-left: 3px;
  white-space: nowrap;
  & + & { border-left: 1px solid #8d8d8d; }
  &:first-child { padding-left: 1px; }
`;

const watch: [string, string][] = [["down", "XAUAUD"], ["down", "Gasoline"], ["down", "GAUCNH"], ["down", "GAUUSD"], ["flat", "SPCX.OQ"], ["down", "NATGAS"], ["up", "GBPUSD"], ["flat", "BTCUSD"]];
const tree: [string, string][] = [["people", "Accounts"], ["fx", "Indicators"], ["hat", "Experts"], ["scroll2", "Scripts"], ["gear", "Services"], ["bag", "Market"], ["cloud", "VPS"]];
const columns: [string, number][] = [["Symbol", 141], ["Ticket", 98], ["Type", 109], ["Volume", 108], ["Price", 109], ["S / L", 108], ["T / P", 109], ["Price", 108]];
const boxTabs = ["Exposure", "History", "News", "Mailbox", "Calendar", "Company", "Alerts", "Articles", "Code Base", "Experts", "Journal"];
const drawTools = ["vline", "hline", "trend", "channel", "fib", "text"];

const App = () => (
  <Window>
    <GlobalStyle />
    <TitleBar>
      <Icon name="logo" size={11} />
      <Title>900099 - BlackBullMarkets-Demo: Demo Account - Hedge - Black Bull Group Limited - [XAGAUD,M1]</Title>
      <WindowButtons $gap={22}>
        <button aria-label="Minimise"><Icon name="minimise" size={10} /></button>
        <button aria-label="Maximise"><Icon name="maximise" size={10} /></button>
        <button aria-label="Close"><Icon name="closeThin" size={11} /></button>
      </WindowButtons>
    </TitleBar>
    <MenuBar>
      <Icon name="twin" size={10} />
      <Menus>
        {["File", "View", "Insert", "Charts", "Tools", "Window", "Help"].map((m) => <button key={m}>{m}</button>)}
      </Menus>
      <Muted>
        <WindowButtons $gap={5}>
          <button aria-label="Pin"><Icon name="pin" size={9} /></button>
          <button aria-label="Minimise chart"><Icon name="minimise" size={8} /></button>
          <button aria-label="Restore chart"><Icon name="restore" size={8} /></button>
          <button aria-label="Close chart"><Icon name="closeThin" size={8} /></button>
        </WindowButtons>
      </Muted>
    </MenuBar>
    <Toolbar>
      <Tool $active $w={22} aria-label="Cursor"><Icon name="cursor" /></Tool>
      <Tool aria-label="Crosshair"><Icon name="cross" /></Tool>
      <Divider />
      {drawTools.map((t) => <Tool key={t} aria-label={t}><Icon name={t} /></Tool>)}
      <Tool $w={28} aria-label="Shapes"><Icon name="shapes" /><Caret /></Tool>
      <Divider $dotted $w={7} />
      <Tool $w={28} aria-label="Chart type"><Icon name="wave" /><Caret /></Tool>
      <Tool $w={29} aria-label="Indicators"><Icon name="indicator" size={15} /><Caret /></Tool>
      <Tool aria-label="Quotes"><Icon name="dollar" size={14} /></Tool>
      <Divider />
      <Tool>IDE</Tool>
      <Tool aria-label="Market"><Icon name="bag" /></Tool>
      <Tool aria-label="Signals"><Icon name="signals" /></Tool>
      <Tool aria-label="VPS"><Icon name="cloud" size={14} /></Tool>
      <Tool $w={22} aria-label="Copy trading"><Icon name="radar" size={14} /></Tool>
      <Divider />
      <WordTool $w={72}><Icon name="stop" size={11} />Algo Trading</WordTool>
      <WordTool $w={70}><Icon name="order" />New Order</WordTool>
      <Divider />
      <Tool aria-label="Bars"><Icon name="bars" /></Tool>
      <Tool $active aria-label="Candles"><Icon name="candles" size={14} /></Tool>
      <Tool aria-label="Line"><Icon name="line" /></Tool>
      <Divider />
      <Tool aria-label="Zoom in"><Icon name="zoomIn" /></Tool>
      <Tool aria-label="Zoom out"><Icon name="zoomOut" /></Tool>
      <Tool aria-label="Tile windows"><Icon name="tile" /></Tool>
      <Divider />
      <Tool $active $w={22} aria-label="Auto scroll"><Icon name="scroll" size={14} /></Tool>
      <Tool aria-label="Chart shift"><Icon name="shift" size={14} /></Tool>
      <Divider />
      <Tool aria-label="Screenshot"><Icon name="camera" size={14} /></Tool>
      <Divider $dotted $w={5} />
      {["M1", "M5", "M15", "M30", "H1"].map((t) => <Tool key={t} $active={t === "M1"}>{t}</Tool>)}
      <ToolsEnd>
        <Tool $w={24} aria-label="Search"><Icon name="search" /></Tool>
        <Tool $w={24} aria-label="Notifications"><Icon name="badge" size={15} /></Tool>
        <Tool $w={24} aria-label="Level"><Icon name="level" /></Tool>
        <Battery />
      </ToolsEnd>
    </Toolbar>

    <Main>
      <Side>
        <PanelHead>
          <span>Market Watch: 23:00:48</span>
          <button aria-label="Close panel"><Icon name="close" size={8} /></button>
        </PanelHead>
        <Watch>
          <WatchTitle>Symbol</WatchTitle>
          {watch.map(([icon, name], i) => (
            <WatchRow key={name} $alt={i % 2 === 0} $dim={name === "SPCX.OQ"}><Icon name={icon} size={7} />{name}</WatchRow>
          ))}
          <QuickAdd><Icon name="plus" size={8} /><QuickInput aria-label="Symbol" defaultValue="SPCX" /></QuickAdd>
        </Watch>
        <QuickHit>SPCX.OQ</QuickHit>
        <TabEdge />
        <PanelHead $soft><span>Navigator</span></PanelHead>
        <Tree>
          <TreeItem $root><Icon name="brand" size={11} />BlackBull-MT5</TreeItem>
          {tree.map(([icon, name]) => (
            <TreeItem key={name}><Icon name="chevron" size={6} /><Twig /><Icon name={icon} size={11} />{name}</TreeItem>
          ))}
        </Tree>
        <SideTabs>
          <SideTab $active>Common</SideTab>
          <SideTab>Favorites</SideTab>
        </SideTabs>
      </Side>
      <ChartPane><PriceChart /></ChartPane>
    </Main>

    <Toolbox>
      <Spine>
        <button aria-label="Close Toolbox"><Icon name="close" size={8} /></button>
        <SpineLabel>Toolbox</SpineLabel>
      </Spine>
      <ToolboxBody>
        <Trades>
          <colgroup>{columns.map(([, w], i) => <col key={i} width={w} />)}<col /></colgroup>
          <thead>
            <tr>
              {columns.map(([name], i) => <th key={i}>{name}</th>)}
              <th><ProfitHead>Profit<Caret /></ProfitHead></th>
            </tr>
          </thead>
          <tbody>
            <tr><td colSpan={8}>{"•   Balance: 206 202.88 USD  Equity: 206 202.88  Free Margin: 206 202.88"}</td><td><ProfitTotal>0.00</ProfitTotal></td></tr>
          </tbody>
        </Trades>
        <Tabs>
          <TradeTab>Trade</TradeTab>
          <TabList>
            {boxTabs.map((t) => <BoxTab key={t}>{t}</BoxTab>)}
            <Services>
              <Service><Icon name="bag" size={10} />Market</Service>
              <Service $off><Icon name="signals" size={11} />Signals</Service>
              <Service><Icon name="cloud" size={11} />VPS</Service>
              <Service><Icon name="chip" size={11} />Tester</Service>
            </Services>
          </TabList>
        </Tabs>
      </ToolboxBody>
    </Toolbox>
    <StatusBar>
      <StatusCell $size={530}>For Help, press F1</StatusCell>
      <StatusCell $size={91}>British Pound</StatusCell>
      {[70, 51, 51, 48, 50, 47].map((w, i) => <StatusCell key={i} $size={w} />)}
      <StatusCell $size={86}><Icon name="strength" size={9} />187 / 1 Kb</StatusCell>
    </StatusBar>
    <EdgeGlow />
    <MarketLens />
  </Window>
);

export default App;
